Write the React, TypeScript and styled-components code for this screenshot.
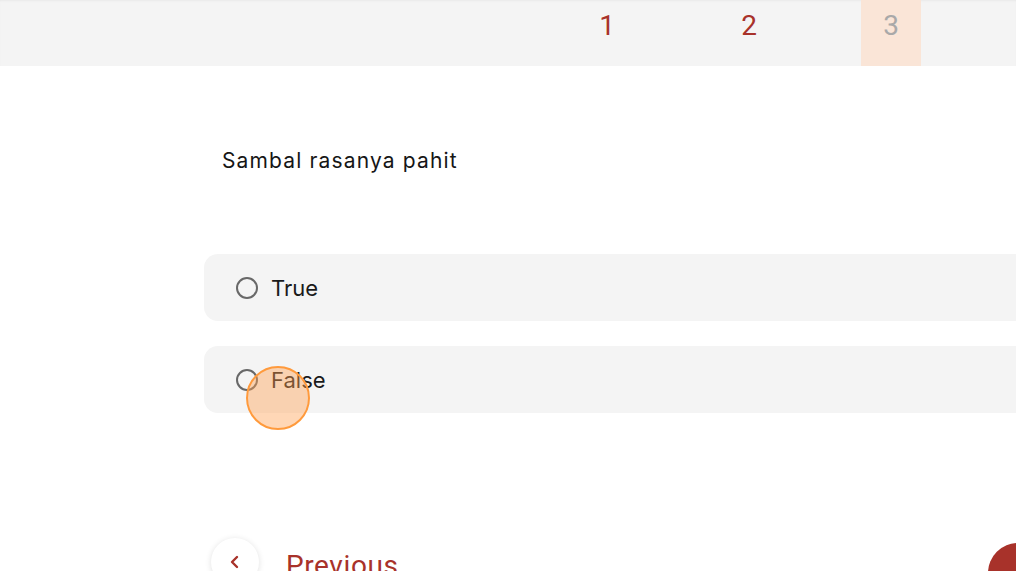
import React from "react";
import styled, { createGlobalStyle } from "styled-components";

const Global = createGlobalStyle`
  html, body { margin: 0; padding: 0; background: #fff; overflow: hidden; }
  body { font-family: Inter, "Noto Sans", sans-serif; width: 1016px; height: 571px; }
`;

const Page = styled.div`
  position: relative;
  width: 1016px;
  height: 571px;
  overflow: hidden;
`;

const Header = styled.header`
  height: 66px;
  background: #f4f4f4;
  box-shadow: inset 0 2px 2px -1px #e9e9e9;
  display: flex;
  align-items: stretch;
  padding-left: 577px;
  gap: 82px;
`;

const Step = styled.div<{ $active?: boolean; $done?: boolean }>`
  width: 60px;
  display: flex;
  justify-content: center;
  padding-top: 10px;
  box-sizing: border-box;
  font-family: Roboto, "Open Sans", sans-serif;
  font-size: 28px;
  line-height: 32px;
  color: ${(p) => (p.$done ? "#a8322a" : "#a9a9a9")};
  background: ${(p) => (p.$active ? "#fae5d7" : "transparent")};
`;

const Main = styled.main`
  width: 1120px;
  padding-left: 204px;
  box-sizing: border-box;
`;

const Question = styled.p`
  margin: 0;
  padding: 82px 0 0 18px;
  font-size: 21px;
  letter-spacing: 1.15px;
  line-height: 26px;
  color: #161616;
`;

const Options = styled.div`
  display: flex;
  flex-direction: column;
  gap: 25px;
  margin-top: 80px;
`;

const Option = styled.label`
  height: 67px;
  background: #f4f4f4;
  border-radius: 14px;
  display: flex;
  align-items: center;
  padding-left: 32px;
  gap: 13px;
  font-size: 22px;
  color: #1a1a1a;
`;

const Radio = styled.span`
  width: 22px;
  height: 22px;
  border: 2px solid #686868;
  border-radius: 50%;
  box-sizing: border-box;
  flex: none;
`;

const Nav = styled.nav`
  display: flex;
  align-items: flex-start;
  justify-content: space-between;
  margin-top: 125px;
  padding-left: 7px;
  padding-right: 72px;
`;

const PrevGroup = styled.div`
  display: flex;
  align-items: center;
  gap: 27px;
`;

const RoundBtn = styled.button`
  width: 48px;
  height: 48px;
  border-radius: 50%;
  border: none;
  background: #fff;
  box-shadow: 0 1px 6px rgba(0, 0, 0, 0.12);
  display: flex;
  align-items: center;
  justify-content: center;
  padding: 0;
`;

const PrevText = styled.span`
  font-family: Roboto, "Open Sans", sans-serif;
  font-size: 28px;
  letter-spacing: 0.6px;
  color: #a8322a;
  margin-top: 6px;
`;

const NextBtn = styled.button`
  width: 60px;
  height: 60px;
  border-radius: 50%;
  border: none;
  background: #a8322a;
  margin-top: 5px;
`;

const Cursor = styled.div`
  position: absolute;
  left: 246px;
  top: 366px;
  width: 64px;
  height: 64px;
  border-radius: 50%;
  box-sizing: border-box;
  border: 2.5px solid #ff9a3c;
  background: rgba(255, 160, 80, 0.42);
  pointer-events: none;
`;

export default function App() {
  return (
    <Page>
      <Global />
      <Header>
        <Step $done>1</Step>
        <Step $done>2</Step>
        <Step $active>3</Step>
      </Header>
      <Main>
        <Question>Sambal rasanya pahit</Question>
        <Options>
          <Option>
            <Radio />
            True
          </Option>
          <Option>
            <Radio />
            False
          </Option>
        </Options>
        <Nav>
          <PrevGroup>
            <RoundBtn aria-label="Previous">
              <svg width="14" height="14" viewBox="0 0 14 14">
                <path d="M9 2 L4 7 L9 12" fill="none" stroke="#a8322a" strokeWidth="2.4" strokeLinecap="round" strokeLinejoin="round" />
              </svg>
            </RoundBtn>
            <PrevText>Previous</PrevText>
          </PrevGroup>
          <NextBtn aria-label="Next" />
        </Nav>
      </Main>
      <Cursor />
    </Page>
  );
}
